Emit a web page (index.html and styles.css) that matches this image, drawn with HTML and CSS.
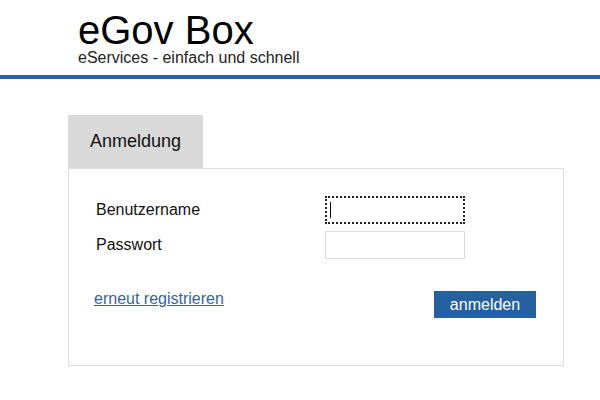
FILE: index.html
```html
<!DOCTYPE html>
<html lang="de">
<head>
<meta charset="utf-8">
<title>eGov Box</title>
<link rel="stylesheet" href="styles.css">
</head>
<body>
<header class="header">
  <div class="brand">
    <div class="brand-title">eGov Box</div>
    <div class="brand-sub">eServices - einfach und schnell</div>
  </div>
</header>
<div class="bar"></div>
<main class="main">
  <div class="tab">Anmeldung</div>
  <form class="panel">
    <div class="fields">
      <label class="label" for="user">Benutzername</label>
      <div class="field-wrap">
        <input class="input input-focused" id="user" type="text">
        <span class="caret"></span>
      </div>
      <label class="label" for="pass">Passwort</label>
      <div class="field-wrap">
        <input class="input" id="pass" type="password">
      </div>
    </div>
    <div class="actions">
      <a class="link" href="#">erneut registrieren</a>
      <button class="btn" type="button">anmelden</button>
    </div>
  </form>
</main>
</body>
</html>
```
FILE: styles.css
```css
* { box-sizing: border-box; }
html, body { margin: 0; padding: 0; background: #fff; }
body {
  font-family: "Liberation Sans", Arial, sans-serif;
  color: #111;
  width: 600px;
  height: 400px;
  overflow: hidden;
}
.header {
  height: 75px;
  padding: 10px 0 0 78px;
}
.brand-title {
  font-size: 40px;
  line-height: 40px;
  color: #000;
}
.brand-sub {
  font-size: 16px;
  line-height: 18px;
  color: #222;
  margin-top: -1px;
}
.bar {
  height: 4px;
  background: #2a62a5;
}
.main {
  padding: 36px 0 0 68px;
  width: 564px;
}
.tab {
  width: 135px;
  height: 53px;
  background: #d9d9d9;
  font-size: 18px;
  padding: 16px 0 0 22px;
  color: #111;
}
.panel {
  border: 1px solid #dcdcdc;
  height: 198px;
  padding: 27px 27px 0 27px;
  margin: 0;
}
.fields {
  display: grid;
  grid-template-columns: 229px 140px;
  grid-auto-rows: 28px;
  row-gap: 7px;
  align-items: center;
}
.label {
  font-size: 16px;
  color: #111;
}
.field-wrap {
  position: relative;
  height: 28px;
}
.input {
  display: block;
  width: 140px;
  height: 28px;
  border: 1px solid #dcdcdc;
  background: #fff;
  padding: 0 4px;
  margin: 0;
  font: 16px "Liberation Sans", Arial, sans-serif;
  outline: none;
}
.input-focused {
  border: 2px dotted #222;
}
.caret {
  position: absolute;
  left: 5px;
  top: 6px;
  width: 1px;
  height: 16px;
  background: #000;
}
.actions {
  display: flex;
  justify-content: space-between;
  align-items: flex-start;
  margin-top: 32px;
}
.link {
  font-size: 16px;
  color: #36649c;
  text-decoration: underline;
  margin-left: -2px;
  margin-top: -1px;
  line-height: 18px;
}
.btn {
  width: 102px;
  height: 27px;
  background: #2561a1;
  color: #fff;
  border: none;
  border-radius: 0;
  font: 16px "Liberation Sans", Arial, sans-serif;
  padding: 0;
  margin: 0;
}
```
